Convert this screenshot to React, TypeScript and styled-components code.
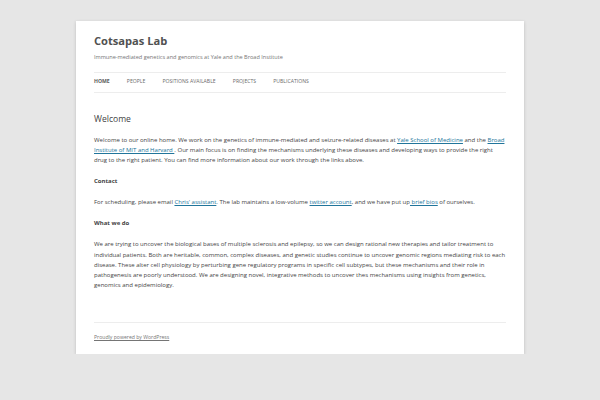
import React from "react";
import styled, { createGlobalStyle } from "styled-components";

const GlobalStyle = createGlobalStyle`
  html, body { margin: 0; padding: 0; }
  body {
    background: #e6e6e6;
    font-family: "Open Sans", "Liberation Sans", sans-serif;
    color: #444;
  }
`;

const Site = styled.div`
  box-sizing: border-box;
  width: 448px;
  margin: 21px auto 0;
  padding: 0 18px;
  background: #fff;
  box-shadow: 0 1px 3px rgba(100, 100, 100, 0.3);
`;

const Header = styled.header`
  padding-top: 10.3px;
`;

const SiteTitle = styled.h1`
  margin: 0;
  font-size: 11.14px;
  line-height: 20.6px;
  font-weight: 700;
  color: #515151;
`;

const Tagline = styled.h2`
  margin: 0;
  font-size: 5.57px;
  line-height: 10.3px;
  font-weight: 400;
  color: #757575;
`;

const Nav = styled.nav`
  margin-top: 10.3px;
  border-top: 1px solid #ededed;
  border-bottom: 1px solid #ededed;
`;

const NavList = styled.ul`
  display: flex;
  list-style: none;
  margin: 0;
  padding: 0;
`;

const NavItem = styled.li<{ $current?: boolean }>`
  margin-right: 17.1px;
  font-size: 5.14px;
  line-height: 18.6px;
  text-transform: uppercase;
  white-space: nowrap;
  color: ${(p) => (p.$current ? "#5a5a5a" : "#6a6a6a")};
  font-weight: ${(p) => (p.$current ? 700 : 400)};
`;

const Main = styled.main`
  padding-top: 21px;
`;

const EntryTitle = styled.h1`
  margin: 0 0 10.3px;
  font-size: 8.57px;
  line-height: 10.3px;
  font-weight: 400;
  color: #444;
`;

const Para = styled.p<{ $strong?: boolean }>`
  margin: 0 0 10.7px;
  font-size: 6px;
  line-height: 10.3px;
  color: #444;
  font-weight: ${(p) => (p.$strong ? 700 : 400)};
  &:last-child { margin-bottom: 0; }
`;

const Link = styled.a`
  color: #21759b;
  text-decoration: underline;
`;

const Footer = styled.footer`
  margin-top: 31.5px;
  border-top: 1px solid #ededed;
  padding: 10.3px 0;
  font-size: 5.14px;
  line-height: 10.3px;
  color: #757575;
`;

const FooterLink = styled.a`
  color: #757575;
  text-decoration: underline;
`;

const navItems = ["Home", "People", "Positions available", "Projects", "Publications"];

export default function App() {
  return (
    <>
      <GlobalStyle />
      <Site>
        <Header>
          <SiteTitle>Cotsapas Lab</SiteTitle>
          <Tagline>Immune-mediated genetics and genomics at Yale and the Broad Institute</Tagline>
          <Nav>
            <NavList>
              {navItems.map((n, i) => (
                <NavItem key={n} $current={i === 0}>
                  {n}
                </NavItem>
              ))}
            </NavList>
          </Nav>
        </Header>
        <Main>
          <article>
            <EntryTitle>Welcome</EntryTitle>
            <div>
              <Para>
                Welcome to our online home. We work on the genetics of immune-mediated and seizure-related diseases at{" "}
                <Link href="#">Yale School of Medicine</Link> and the{" "}
                <Link href="#">Broad Institute of MIT and Harvard </Link>. Our main focus is on finding the mechanisms
                underlying these diseases and developing ways to provide the right drug to the right patient. You can
                find more information about our work through the links above.
              </Para>
              <Para $strong>Contact</Para>
              <Para>
                For scheduling, please email <Link href="#">Chris' assistant</Link>. The lab maintains a low-volume{" "}
                <Link href="#">twitter account</Link>, and we have put up<Link href="#"> brief bios</Link> of ourselves.
              </Para>
              <Para $strong>What we do</Para>
              <Para>
                We are trying to uncover the biological bases of multiple sclerosis and epilepsy, so we can design
                rational new therapies and tailor treatment to individual patients. Both are heritable, common, complex
                diseases, and genetic studies continue to uncover genomic regions mediating risk to each disease. These
                alter cell physiology by perturbing gene regulatory programs in specific cell subtypes, but these
                mechanisms and their role in pathogenesis are poorly understood. We are designing novel, integrative
                methods to uncover thes mechanisms using insights from genetics, genomics and epidemiology.
              </Para>
            </div>
          </article>
        </Main>
        <Footer>
          <FooterLink href="#">Proudly powered by WordPress</FooterLink>
        </Footer>
      </Site>
    </>
  );
}
